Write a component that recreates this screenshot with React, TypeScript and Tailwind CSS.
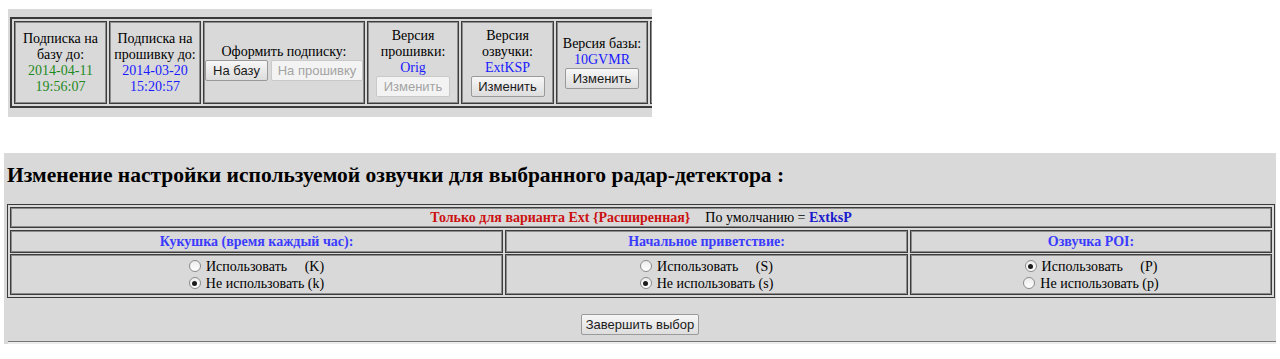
import React from 'react';

const serif = "font-['Liberation_Serif','Times_New_Roman',serif]";
const sans = "font-['Liberation_Sans',Arial,sans-serif]";

function Btn({ label, disabled, w }: { label: string; disabled?: boolean; w: string }) {
    return (
        <button
            disabled={disabled}
            className={`${sans} ${w} h-[21px] rounded-[2px] border text-[13px] leading-[19px] ${
                disabled
                    ? 'border-[#c9c9c9] bg-[#f3f3f3] text-[#a3a3a3]'
                    : 'border-[#9a9a9a] bg-gradient-to-b from-[#f7f7f7] to-[#dddddd] text-[#1a1a1a]'
            }`}
        >
            {label}
        </button>
    );
}

function Radio({ checked }: { checked?: boolean }) {
    return (
        <span className="inline-flex h-[12px] w-[12px] shrink-0 items-center justify-center rounded-full border border-[#8a8a8a] bg-gradient-to-b from-[#ececec] to-white">
            {checked && <span className="h-[5px] w-[5px] rounded-full bg-[#1c1c1c]" />}
        </span>
    );
}

function Choice({ letter, on }: { letter: string; on: boolean }) {
    return (
        <div className="flex flex-col items-center">
            <div className="flex h-[17px] items-center">
                <Radio checked={on} />
                <span className="ml-[5px] whitespace-pre">
                    {'Использовать\u00a0\u00a0\u00a0\u00a0\u00a0(' + letter.toUpperCase() + ')'}
                </span>
            </div>
            <div className="flex h-[17px] items-center">
                <Radio checked={!on} />
                <span className="ml-[5px] whitespace-pre">{'Не использовать (' + letter + ')'}</span>
            </div>
        </div>
    );
}

const topCell = 'flex flex-col items-center justify-center border border-[#3c3c3c] shadow-[inset_0_0_0_1px_#8c8c8c] text-center leading-[16px]';
const botCell = 'flex items-center justify-center border border-[#3c3c3c] shadow-[inset_0_0_0_1px_#8c8c8c]';

export default function App() {
    return (
        <div className={`${serif} min-h-[359px] bg-white text-[14px] text-black`}>
            {/* subscription strip */}
            <div className="ml-[8px] pt-[9px]">
                <div className="h-[108px] w-[644px] overflow-hidden bg-[#d9d9d9] pt-[8px] pl-[2px]">
                    <div className="flex w-max gap-[2px] border-2 border-[#3a3a3a] p-[2px]">
                        <div className={`${topCell} h-[83px] w-[93px]`}>
                            <span>Подписка на</span>
                            <span>базу до:</span>
                            <span className="text-[#1f8a1f]">2014-04-11</span>
                            <span className="text-[#1f8a1f]">19:56:07</span>
                        </div>
                        <div className={`${topCell} h-[83px] w-[92px]`}>
                            <span>Подписка на</span>
                            <span>прошивку до:</span>
                            <span className="text-[#1a1aff]">2014-03-20</span>
                            <span className="text-[#1a1aff]">15:20:57</span>
                        </div>
                        <div className={`${topCell} h-[83px] w-[162px]`}>
                            <span>Оформить подписку:</span>
                            <div className="flex gap-[3px]">
                                <Btn label="На базу" w="w-[63px]" />
                                <Btn label="На прошивку" w="w-[92px]" disabled />
                            </div>
                        </div>
                        <div className={`${topCell} h-[83px] w-[92px]`}>
                            <span>Версия</span>
                            <span>прошивки:</span>
                            <span className="text-[#1a1aff]">Orig</span>
                            <Btn label="Изменить" w="w-[74px]" disabled />
                        </div>
                        <div className={`${topCell} h-[83px] w-[93px]`}>
                            <span>Версия</span>
                            <span>озвучки:</span>
                            <span className="text-[#1a1aff]">ExtKSP</span>
                            <Btn label="Изменить" w="w-[74px]" />
                        </div>
                        <div className={`${topCell} h-[83px] w-[92px]`}>
                            <span>Версия базы:</span>
                            <span className="text-[#1a1aff]">10GVMR</span>
                            <Btn label="Изменить" w="w-[74px]" />
                        </div>
                        <div className={`${topCell} h-[83px] w-[92px]`} />
                    </div>
                </div>
            </div>

            {/* voice settings */}
            <div className="mt-[36px] ml-[4px] w-[1272px] bg-[#d9d9d9] pt-[9px]">
                <h2 className="h-[26px] pl-[3px] text-[21.5px] leading-[26px] font-bold">
                    Изменение настройки используемой озвучки для выбранного радар-детектора :
                </h2>
                <div className="mt-[16px] ml-[3px] flex w-[1268px] flex-col gap-[2px] border border-[#3a3a3a] p-[2px]">
                    <div className={`${botCell} h-[21px] gap-[15px]`}>
                        <b className="text-[#cc1111]">Только для варианта Ext {'{Расширенная}'}</b>
                        <span>
                            По умолчанию = <b className="text-[#1a1acc]">ExtksP</b>
                        </span>
                    </div>
                    <div className="grid h-[22px] grid-cols-[493px_403px_1fr] gap-[2px] font-bold text-[#3b3bff]">
                        <div className={botCell}>Кукушка (время каждый час):</div>
                        <div className={botCell}>Начальное приветствие:</div>
                        <div className={botCell}>Озвучка POI:</div>
                    </div>
                    <div className="grid h-[41px] grid-cols-[493px_403px_1fr] gap-[2px] leading-[17px]">
                        <div className={botCell}>
                            <Choice letter="k" on={false} />
                        </div>
                        <div className={botCell}>
                            <Choice letter="s" on={false} />
                        </div>
                        <div className={botCell}>
                            <Choice letter="p" on={true} />
                        </div>
                    </div>
                </div>
                <div className="mt-[16px] flex justify-center">
                    <Btn label="Завершить выбор" w="w-[118px]" />
                </div>
                <div className="mt-[6px] ml-[4px] h-[3px] border-t border-[#777] bg-[#ececec]" />
            </div>
        </div>
    );
}
